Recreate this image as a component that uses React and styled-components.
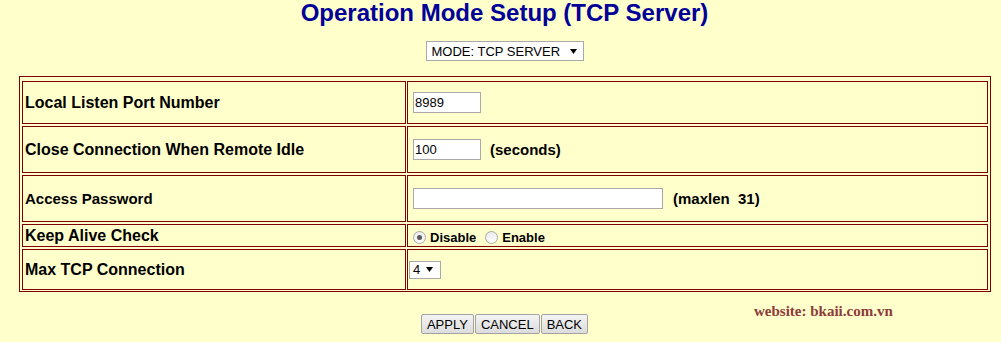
import React from 'react'
import styled, { createGlobalStyle } from 'styled-components'

const GlobalStyle = createGlobalStyle`
  html, body {
    margin: 0;
    padding: 0;
    background: #ffffcc;
  }
  body {
    font-family: Arial, "Liberation Sans", sans-serif;
    color: #000;
  }
`

const Page = styled.div`
  width: 993px;
  margin-left: 8px;
`

const Title = styled.h1`
  margin: 0;
  font-size: 24px;
  line-height: 26px;
  font-weight: bold;
  color: #000099;
  text-align: center;
`

const ModeRow = styled.div`
  display: flex;
  justify-content: center;
  margin-top: 15px;
`

const SelectBox = styled.div`
  display: inline-flex;
  align-items: center;
  justify-content: space-between;
  box-sizing: border-box;
  width: ${p => p.$width}px;
  height: ${p => p.$height}px;
  padding: 0 ${p => p.$padRight}px 0 ${p => p.$padLeft}px;
  border: 1px solid #a9a9a9;
  background: #fff;
  font-size: 13px;
  color: #000;
`

const FormTable = styled.div`
  display: grid;
  grid-template-columns: 384px 581px;
  column-gap: 1px;
  row-gap: 2px;
  box-sizing: border-box;
  width: 972px;
  margin: 15px 0 0 11px;
  padding: 4px 2px 1px 2px;
  border: 1px solid #800000;
`

const Cell = styled.div`
  box-sizing: border-box;
  height: ${p => p.$h}px;
  border: 1px solid #800000;
  display: flex;
  align-items: center;
`

const LabelCell = styled(Cell)`
  padding: 0 2px;
  font-weight: bold;
  font-size: ${p => p.$size || 16}px;
`

const FieldCell = styled(Cell)`
  padding: ${p => p.$shift || 0}px 1px 0 1px;
`

const TextInput = styled.input`
  box-sizing: border-box;
  width: ${p => p.$width}px;
  height: 21px;
  margin: 0 0 0 4px;
  padding: 0 1px;
  border: 1px solid #a9a9a9;
  background: #fff;
  font-family: Arial, "Liberation Sans", sans-serif;
  font-size: 13px;
  color: #000;
  outline: none;
`

const Note = styled.span`
  margin-left: ${p => p.$gap}px;
  font-weight: bold;
  font-size: 15px;
`

const RadioOption = styled.label`
  display: inline-flex;
  align-items: center;
  margin-left: ${p => p.$gap}px;
  font-weight: bold;
  font-size: 13px;
`

const RadioDot = styled.span`
  position: relative;
  box-sizing: border-box;
  width: 13px;
  height: 13px;
  margin-right: 4px;
  border: 1px solid #a8a8a8;
  border-radius: 50%;
  background: linear-gradient(#ececec, #fdfdfd);

  &::after {
    content: '';
    display: ${p => (p.$checked ? 'block' : 'none')};
    position: absolute;
    left: 3px;
    top: 3px;
    width: 5px;
    height: 5px;
    border-radius: 50%;
    background: #5a5a5a;
  }
`

const Footer = styled.div`
  position: relative;
  height: 50px;
`

const ButtonBar = styled.div`
  display: flex;
  justify-content: center;
  gap: 1px;
  padding-top: 22px;
`

const Button = styled.button`
  box-sizing: border-box;
  height: 20px;
  padding: 0 5px;
  border: 1px solid #a3a3a3;
  border-radius: 2px;
  background: linear-gradient(#f4f4f4, #dcdcdc);
  font-family: Arial, "Liberation Sans", sans-serif;
  font-size: 13px;
  color: #000;
`

const Watermark = styled.div`
  position: absolute;
  left: 746px;
  top: 11px;
  font-family: "Liberation Serif", "Times New Roman", serif;
  font-weight: bold;
  font-size: 15px;
  line-height: 17px;
  color: #8e3b3b;
`

const Caret = () => (
  <svg width="7" height="5" viewBox="0 0 7 5">
    <polygon points="0,0 7,0 3.5,5" fill="#000" />
  </svg>
)

const Radio = ({ checked, label, gap }) => (
  <RadioOption $gap={gap}>
    <RadioDot $checked={checked} />
    {label}
  </RadioOption>
)

export default function App() {
  return (
    <>
      <GlobalStyle />
      <Page>
        <Title>Operation Mode Setup (TCP Server)</Title>

        <ModeRow>
          <SelectBox $width={158} $height={20} $padLeft={5} $padRight={6}>
            <span>MODE: TCP SERVER</span>
            <Caret />
          </SelectBox>
        </ModeRow>

        <FormTable>
          <LabelCell $h={43}>Local Listen Port Number</LabelCell>
          <FieldCell $h={43}>
            <TextInput $width={68} defaultValue="8989" />
          </FieldCell>

          <LabelCell $h={47}>Close Connection When Remote Idle</LabelCell>
          <FieldCell $h={47}>
            <TextInput $width={68} defaultValue="100" />
            <Note $gap={9}>(seconds)</Note>
          </FieldCell>

          <LabelCell $h={47} $size={15}>Access Password</LabelCell>
          <FieldCell $h={47}>
            <TextInput type="password" $width={250} defaultValue="" />
            <Note $gap={10}>(maxlen&nbsp;&nbsp;31)</Note>
          </FieldCell>

          <LabelCell $h={23}>Keep Alive Check</LabelCell>
          <FieldCell $h={23} $shift={3}>
            <Radio checked label="Disable" gap={4} />
            <Radio label="Enable" gap={9} />
          </FieldCell>

          <LabelCell $h={41}>Max TCP Connection</LabelCell>
          <FieldCell $h={41}>
            <SelectBox $width={32} $height={18} $padLeft={3} $padRight={7}>
              <span>4</span>
              <Caret />
            </SelectBox>
          </FieldCell>
        </FormTable>

        <Footer>
          <ButtonBar>
            <Button>APPLY</Button>
            <Button>CANCEL</Button>
            <Button>BACK</Button>
          </ButtonBar>
          <Watermark>website: bkaii.com.vn</Watermark>
        </Footer>
      </Page>
    </>
  )
}
